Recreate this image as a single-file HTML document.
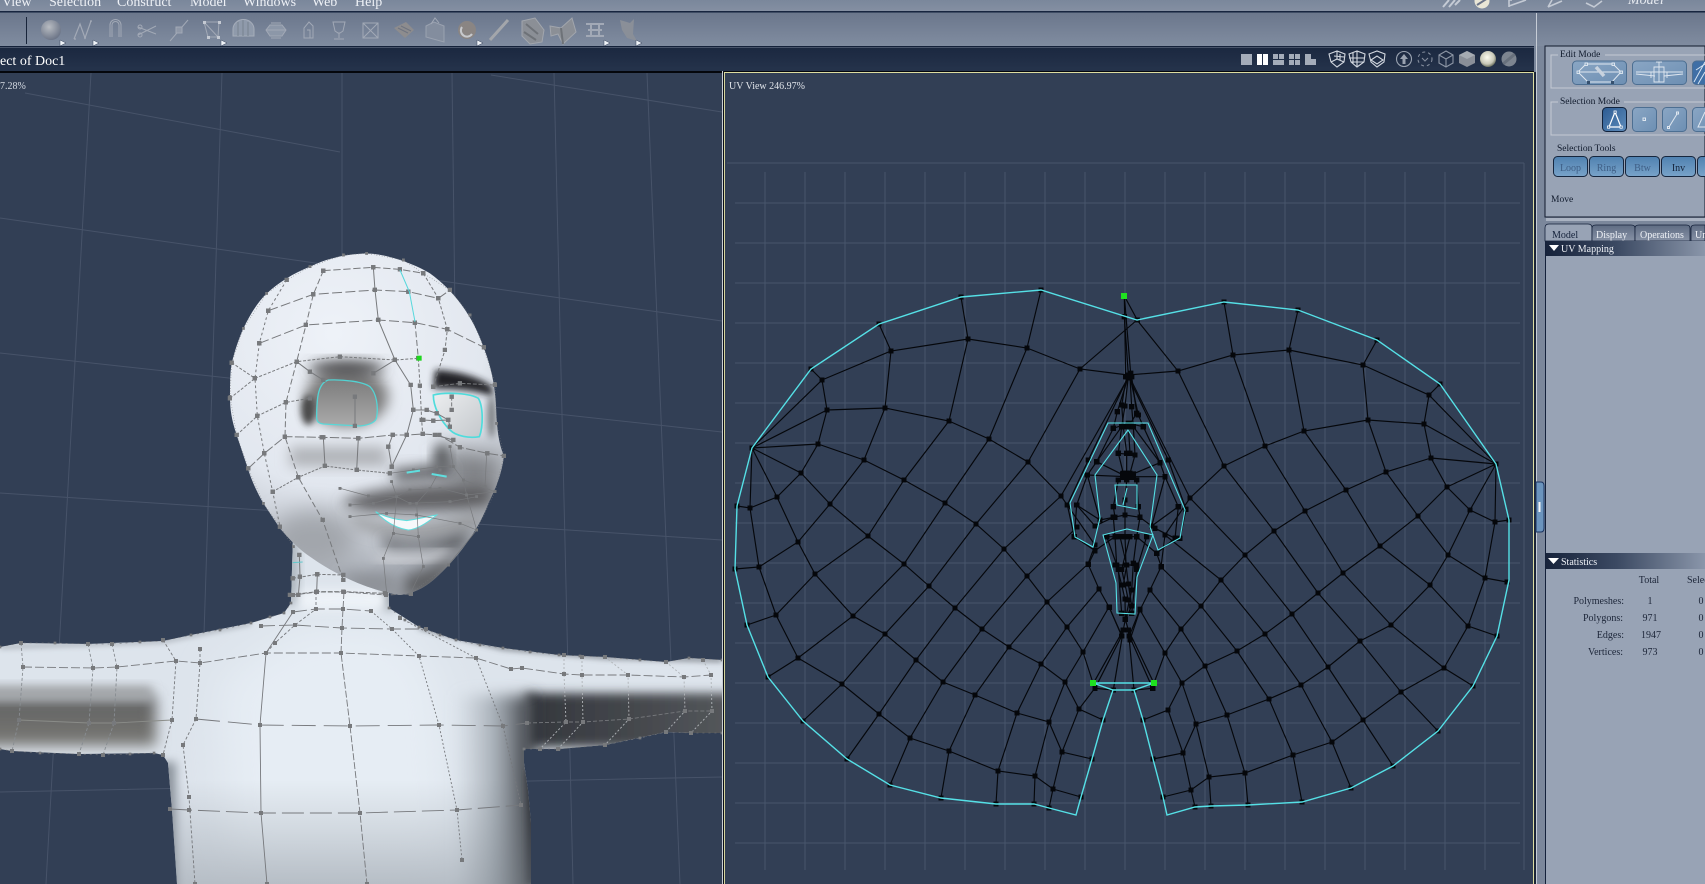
<!DOCTYPE html>
<html><head><meta charset="utf-8"><title>UV View</title>
<style>
html,body{margin:0;padding:0;background:#323f55;overflow:hidden}
svg{display:block}
text{font-family:"Liberation Serif",serif}
</style></head><body>
<svg width="1705" height="884" viewBox="0 0 1705 884" xmlns="http://www.w3.org/2000/svg">
<defs>
<marker id="k" viewBox="0 0 4 4" refX="2" refY="2" markerWidth="4.5" markerHeight="4.5"><rect width="4" height="4" fill="#05070b"/></marker>
<marker id="g" viewBox="0 0 4 4" refX="2" refY="2" markerWidth="4.5" markerHeight="4.5"><rect width="4" height="4" fill="#77797c"/></marker>
<linearGradient id="menu" x1="0" y1="0" x2="0" y2="1"><stop offset="0" stop-color="#7a879b"/><stop offset="1" stop-color="#848fa2"/></linearGradient>
<linearGradient id="tb" x1="0" y1="0" x2="0" y2="1"><stop offset="0" stop-color="#6b778c"/><stop offset="1" stop-color="#808ca0"/></linearGradient>
<linearGradient id="title" x1="0" y1="0" x2="0" y2="1"><stop offset="0" stop-color="#1b2840"/><stop offset="1" stop-color="#25334b"/></linearGradient>
<linearGradient id="hdr" x1="0" y1="0" x2="1" y2="0"><stop offset="0" stop-color="#17233b"/><stop offset=".45" stop-color="#3c4a63"/><stop offset="1" stop-color="#8a96aa"/></linearGradient>
<linearGradient id="btn" x1="0" y1="0" x2="1" y2="1"><stop offset="0" stop-color="#8aa6c4"/><stop offset="1" stop-color="#6d8fb3"/></linearGradient>
<linearGradient id="btn2" x1="0" y1="0" x2="0" y2="1"><stop offset="0" stop-color="#4f81b0"/><stop offset="1" stop-color="#79a3c9"/></linearGradient>
<linearGradient id="btn3" x1="0" y1="0" x2="1" y2="1"><stop offset="0" stop-color="#2c5b92"/><stop offset="1" stop-color="#5e8cbb"/></linearGradient>
<linearGradient id="tab" x1="0" y1="0" x2="0" y2="1"><stop offset="0" stop-color="#5f6c83"/><stop offset="1" stop-color="#8792a6"/></linearGradient>
<radialGradient id="sph" cx=".4" cy=".35" r=".7"><stop offset="0" stop-color="#b8bcc2"/><stop offset="1" stop-color="#687184"/></radialGradient>
<radialGradient id="glow" cx=".45" cy=".4" r=".6"><stop offset="0" stop-color="#fbfbf0"/><stop offset=".7" stop-color="#c8c8b8"/><stop offset="1" stop-color="#6d7260"/></radialGradient>
<radialGradient id="headg" gradientUnits="userSpaceOnUse" cx="400" cy="280" r="760"><stop offset="0" stop-color="#eef2f8"/><stop offset=".6" stop-color="#e2e7ef"/><stop offset=".85" stop-color="#c0c5cd"/><stop offset="1" stop-color="#9da2aa"/></radialGradient>
<linearGradient id="eyeL" x1="0" y1="0" x2="0" y2="1"><stop offset="0" stop-color="#7d7d7d"/><stop offset="1" stop-color="#aaa"/></linearGradient>
<linearGradient id="eyeR" x1="0" y1="0" x2="1" y2="1"><stop offset="0" stop-color="#eceef0"/><stop offset="1" stop-color="#c4c8cc"/></linearGradient>
<linearGradient id="armL" x1="0" y1="0" x2="0" y2="1"><stop offset="0" stop-color="#616264"/><stop offset=".5" stop-color="#6c6c6a"/><stop offset="1" stop-color="#7a7a77"/></linearGradient>
<linearGradient id="armR" x1="0" y1="0" x2="1" y2="0"><stop offset="0" stop-color="#34373d"/><stop offset=".5" stop-color="#44474c"/><stop offset="1" stop-color="#55585c"/></linearGradient>
<linearGradient id="torsoR" gradientUnits="userSpaceOnUse" x1="455" y1="0" x2="531" y2="0"><stop offset="0" stop-color="#b4bcc4" stop-opacity="0"/><stop offset=".55" stop-color="#a4acb4"/><stop offset=".8" stop-color="#6d7279"/><stop offset="1" stop-color="#34373c"/></linearGradient>
<linearGradient id="lowshade" gradientUnits="userSpaceOnUse" x1="0" y1="780" x2="0" y2="884"><stop offset="0" stop-color="#7c848c" stop-opacity="0"/><stop offset="1" stop-color="#7c848c" stop-opacity=".4"/></linearGradient>
<filter id="b3" x="-50%" y="-50%" width="200%" height="200%"><feGaussianBlur stdDeviation="3"/></filter>
<filter id="b5" x="-50%" y="-50%" width="200%" height="200%"><feGaussianBlur stdDeviation="5"/></filter>
<filter id="b7" x="-50%" y="-50%" width="200%" height="200%"><feGaussianBlur stdDeviation="7"/></filter>
<filter id="b10" x="-50%" y="-50%" width="200%" height="200%"><feGaussianBlur stdDeviation="10"/></filter>
<filter id="b20" x="-50%" y="-50%" width="200%" height="200%"><feGaussianBlur stdDeviation="20"/></filter>
<filter id="b35" x="-60%" y="-60%" width="220%" height="220%"><feGaussianBlur stdDeviation="35"/></filter>
<clipPath id="vL"><rect x="0" y="73" width="722" height="811"/></clipPath>
<clipPath id="bodyc"><path d="M0 647 21 643 88 644 163 641 191 635 251 623 284 613 291 603 293 535 389 535 389 608 419 627 456 640 503 648 559 655 605 657 666 662 689 658 722 660 722 733 691 733 666 732 605 745 559 749 524 749 524 763 528 790 531 823 531 884 177 884 172 810 168 763 163 755 154 753 79 754 12 751 0 749Z"/></clipPath>
<clipPath id="headc"><path d="M500 40C560 42 640 70 690 100C760 150 820 230 850 320C870 370 885 430 888 500C890 560 895 610 912 648C905 700 890 740 865 790C840 860 780 950 700 1020C670 1045 640 1060 600 1065C500 1050 400 1000 330 950C300 930 270 900 240 865L190 790C165 745 155 720 145 690L110 585C95 540 90 510 90 470C90 430 90 400 95 370C105 330 115 300 130 265C150 225 170 190 200 160C240 125 280 100 330 80C380 55 440 42 500 40Z"/></clipPath>
</defs>

<!-- chrome -->
<rect width="1705" height="884" fill="#7b879b"/>
<rect width="1705" height="11" fill="url(#menu)"/>
<rect y="11" width="1705" height="1.6" fill="#17253f"/>
<rect y="13" width="1536" height="33" fill="url(#tb)"/>
<rect x="1537" y="13" width="168" height="33" fill="url(#tb)"/>
<rect x="1536" y="13" width="1" height="871" fill="#c6ccd6"/>
<rect y="46" width="1534" height="1.5" fill="#14213a"/>
<rect y="48" width="1534" height="23" fill="url(#title)"/>
<rect y="71" width="1534" height="2" fill="#05070c"/>

<g fill="#eef1f6" font-size="14">
<text x="2" y="6">View</text><text x="49" y="6">Selection</text><text x="117" y="6">Construct</text><text x="190" y="6">Model</text><text x="243" y="6">Windows</text><text x="312" y="6">Web</text><text x="355" y="6">Help</text>
</g>
<text x="1628" y="4" font-size="14" font-style="italic" fill="#e6eaf0">Model</text>
<!-- top right icons -->
<g fill="none" stroke="#c4cad4" stroke-width="2">
<path d="M1443 7 1449 0M1449 7 1455 0M1455 5 1460 0"/>
<path d="M1509 6 1526 0M1509 7V0L1512 0" stroke-width="1.6"/>
<path d="M1548 7 1562 1M1548 7 1552 0" stroke-width="1.6"/>
<path d="M1586 3 1594 7 1602 1" stroke-width="1.6"/>
</g>
<circle cx="1482" cy="1" r="7.5" fill="#e9e6d6"/><path d="M1477 5 1488 -2" stroke="#6b7488" stroke-width="2"/>

<!-- toolbar -->
<rect x="26" y="17" width="1" height="27" fill="#18243a"/>
<g fill="none" stroke="#a2a9b6" stroke-width="1">
<circle cx="51" cy="30" r="10" fill="url(#sph)" stroke="none"/>
<path d="M74 39 80 24 85 38 91 21M74 39h2M84 38h2M90 21h2" stroke-width="1.2"/>
<path d="M110 37V25a5.500 5.500 0 0 1 11 0V37M112 37V25a3.500 3.500 0 0 1 7 0V37" />
<path d="M138 27 156 34M138 35 156 26"/><circle cx="140" cy="27" r="2"/><circle cx="140" cy="35" r="2"/>
<path d="M170 41 188 20"/><rect x="176" y="27" width="6" height="6" fill="#8f98a8"/>
<path d="M204 22H219L218 37H208ZM204 22 218 37" /><g fill="#c4c9d2" stroke="none"><rect x="203" y="21" width="3" height="3"/><rect x="218" y="21" width="3" height="3"/><rect x="207" y="36" width="3" height="3"/><rect x="217" y="36" width="3" height="3"/></g>
<path d="M233 36V29a10 9 0 0 1 21 0V36Z" fill="#8f9aab" stroke="#a5adba"/><path d="M243 20V36M238 22V36M248 22V36" stroke="#77828f"/>
<path d="M270 25H282L286 30 282 36H270L266 30Z" fill="#8c97a8"/><path d="M271 23H281M271 38H281M266 30H286"/>
<path d="M304 38V28L309 22 313 26V38ZM307 30H310V38"/>
<path d="M333 22H345L343 31 340 33H338L335 31ZM339 33V38M334 39H344"/>
<rect x="363" y="23" width="15" height="15"/><path d="M363 23 378 38M378 23 363 38"/>
<path d="M394 28 406 22 414 30 405 38Z" fill="#8d8c8e" stroke="none"/><path d="M398 28 408 33M401 26 411 31" stroke="#6f7480"/>
<path d="M426 26 434 22 444 26V42L426 37Z" fill="#838d9e" stroke="#9aa2b0"/><path d="M431 24 435 18 439 23"/>
<circle cx="467" cy="30" r="9" fill="#8a8583" stroke="none"/><path d="M462 27a6 6 0 0 0 10 7" stroke="#c7c9cd" stroke-width="2"/>
<path d="M490 40 508 20" stroke="#a3a6ab" stroke-width="3"/>
<path d="M522 21 535 18 544 30 542 42 530 44 522 36Z" fill="#8b8f96" stroke="#a2a6ad"/><path d="M526 24 538 34M524 32 536 40" stroke="#6e7278" stroke-width="2"/>
<path d="M550 26 561 28 572 18 576 32 563 44 558 34 551 36Z" fill="#8b8f96" stroke="#a2a6ad"/><path d="M561 28 563 44" stroke="#6e7278" stroke-width="2"/>
<path d="M586 24H604M586 36H604M591 24V36M599 24V36M588 30H602" stroke-width="2"/>
<path d="M620 20 630 23 634 19 633 34 637 41 627 38 622 30Z" fill="#8a8f98" stroke="none"/>
</g>
<g fill="#f0f3f8" stroke="#3a4660" stroke-width=".5"><path d="M60 40 66 43 60 46Z"/><path d="M93 40 99 43 93 46Z"/><path d="M221 40 227 43 221 46Z"/><path d="M477 40 483 43 477 46Z"/><path d="M604 40 610 43 604 46Z"/><path d="M636 40 642 43 636 46Z"/></g>

<text x="0" y="65" font-size="14" fill="#fff">ect of Doc1</text>
<!-- title bar icons -->
<g fill="#a4acb9">
<rect x="1241" y="54" width="11" height="11"/>
<rect x="1257" y="54" width="5" height="11" fill="#fff"/><rect x="1263" y="54" width="5" height="11" fill="#fff"/>
<rect x="1273" y="54" width="5" height="5"/><rect x="1279" y="54" width="5" height="5"/><rect x="1273" y="60" width="11" height="5"/>
<rect x="1289" y="54" width="5" height="5"/><rect x="1295" y="54" width="5" height="5"/><rect x="1289" y="60" width="5" height="5"/><rect x="1295" y="60" width="5" height="5"/>
<path d="M1305 54H1311V59H1316V65H1305Z"/>
</g>
<g fill="none" stroke="#d3d8e0" stroke-width="1.100">
<path d="M1329 54 1337 51 1345 54 1344 62 1337 67 1331 62ZM1337 51V59L1331 62M1337 59 1344 62M1340 54V60M1334 56 1344 57"/>
<path d="M1349 54 1357 51 1365 54 1364 62 1357 67 1351 62ZM1353 53V64M1357 51V67M1349 58H1365M1351 62H1364"/>
<path d="M1369 54 1377 51 1385 54 1384 62 1377 67 1371 62ZM1371 60 1377 56 1383 60 1377 64Z"/>
<circle cx="1404" cy="59" r="7.500" stroke="#99a2b0"/><path d="M1404 54 1400 59H1402.500V64H1405.500V59H1408Z" fill="#99a2b0" stroke="none"/>
<circle cx="1425" cy="59" r="7" stroke="#838c9c" stroke-dasharray="3 3"/><path d="M1422 58 1425 61 1428 58" stroke="#838c9c"/>
<path d="M1446 51 1453 55V63L1446 67 1439 63V55ZM1439 55 1446 59 1453 55M1446 59V67" stroke="#8d96a5"/>
</g>
<path d="M1467 51 1475 55V63L1467 67 1459 63V55Z" fill="#8a8f98"/><path d="M1467 51 1475 55 1467 59 1459 55Z" fill="#a6abb2"/>
<circle cx="1488" cy="59" r="8" fill="url(#glow)"/>
<circle cx="1509" cy="59" r="7.500" fill="#7d8590"/><path d="M1503 64 1515 54" stroke="#5b6472" stroke-width="3" opacity=".6"/>

<!-- viewports -->
<rect x="0" y="73" width="722" height="811" fill="#323f55"/>
<rect x="722" y="71" width="1" height="813" fill="#c9ced4"/>
<rect x="723" y="71" width="1.500" height="813" fill="#0a0f18"/>
<rect x="724.500" y="73" width="809" height="811" fill="#323f55"/>
<rect x="724" y="72" width="810" height="1" fill="#dcdca0"/>
<rect x="724" y="72" width="1" height="812" fill="#d4d49c"/>
<rect x="1533" y="72" width="1" height="812" fill="#dcdca0"/>
<rect x="1534" y="72" width="2" height="812" fill="#1a2536"/>

<!-- left grid -->
<g stroke="#475369" stroke-width="1" fill="none" clip-path="url(#vL)">
<path d="M91 73 46 884M222 73 196 884M342 73 342 884M452 73 462 884M554 73 573 884M647 73 680 884"/>
<path d="M0 218 722 321M0 353 722 432M0 493 722 540M0 792 722 777M491 75 722 112M25 93 340 152"/>
</g>
<text x="0" y="89" font-size="10" fill="#d6dbe3">7.28%</text>

<!-- character -->
<g clip-path="url(#vL)">
<g clip-path="url(#bodyc)">
<rect x="0" y="530" width="722" height="354" fill="#dde4ec"/>
<rect x="284" y="535" width="14" height="70" fill="#a9b1b9" filter="url(#b5)"/>
<rect x="381" y="535" width="14" height="75" fill="#8d949c" filter="url(#b5)"/>
<rect x="300" y="590" width="85" height="20" fill="#eef3f8" filter="url(#b5)"/>
<path d="M300 626 400 626 440 680 450 860 230 860 220 680Z" fill="#e6edf4" filter="url(#b20)"/>
<rect x="-20" y="696" width="176" height="50" fill="url(#armL)" filter="url(#b7)"/>
<rect x="-20" y="686" width="172" height="14" fill="#a2a5a8" filter="url(#b5)"/>
<rect x="526" y="693" width="210" height="54" fill="url(#armR)" filter="url(#b5)"/>
<rect x="455" y="695" width="80" height="205" fill="url(#torsoR)" filter="url(#b7)"/>
<rect x="154" y="762" width="22" height="130" fill="#8b939b" filter="url(#b5)"/>
<rect x="526" y="770" width="10" height="115" fill="#2f3238" filter="url(#b3)"/>
<rect x="0" y="780" width="722" height="104" fill="url(#lowshade)"/>
<path d="M0 647 88 644 163 641 251 623" stroke="#9aa0a8" stroke-width="3" fill="none" filter="url(#b3)"/>
<path d="M419 627 503 648 605 657 722 660" stroke="#5c6068" stroke-width="3" fill="none" filter="url(#b3)"/>
</g>
<g fill="none" stroke="#76787c" stroke-width=".9" marker-start="url(#g)" marker-mid="url(#g)" marker-end="url(#g)">
<path stroke-dasharray="9 3" d="M23 667 93 668 117 667 176 661 200 663 266 653 341 653 419 656 476 658 511 669 522 668 564 674 582 675 628 675 684 677 711 675"/>
<path stroke-dasharray="14 4" d="M261 626 295 625 342 628 392 629 426 629"/>
<path stroke-dasharray="14 4" d="M293 612 316 609 343 609 371 611"/>
<path stroke-dasharray="5 2" d="M293 595 317 592 344 592 386 595 411 594"/>
<path d="M19 720 89 723 114 723 172 720" stroke="#8a8c88"/>
<path stroke-dasharray="24 8" d="M196 719 260 725 350 726 439 725 503 726 527 723"/>
<path stroke-dasharray="4 2" d="M527 723 566 722 583 722 629 719 685 711 712 711"/>
<path stroke-dasharray="22 6" d="M170 809 189 810 261 813 360 813 457 810 521 805"/>
<path stroke-dasharray="3 2" stroke="#888d92" d="M21 643 23 667 19 720 12 751"/>
<path stroke-dasharray="3 2" stroke="#888d92" d="M88 644 93 668 89 723 79 754"/>
<path stroke-dasharray="3 2" stroke="#888d92" d="M112 644 117 667 114 723 103 755"/>
<path stroke-dasharray="3 2" d="M163 640 176 661 172 720 163 755"/>
<path stroke-dasharray="3 2" d="M200 649 200 663 196 719 183 745 189 797 195 884"/>
<path d="M293 612 266 653 260 725 261 813 267 884"/>
<path stroke-dasharray="3 2" d="M316 592 316 609 295 625 275 643 266 653"/>
<path stroke-dasharray="7 2" d="M344 592 343 609 342 628 341 653 350 726 360 813 367 884"/>
<path stroke-dasharray="2 2" d="M371 611 392 629 419 656 439 725 457 810 462 860"/>
<path stroke-dasharray="2 2" d="M400 618 476 658 503 726 521 805"/>
<path stroke-dasharray="2 2" stroke="#b0b4b8" d="M564 655 564 674 566 722 540 749"/>
<path stroke-dasharray="2 2" stroke="#b0b4b8" d="M582 657 582 675 583 722 558 749"/>
<path stroke-dasharray="2 2" stroke="#b0b4b8" d="M605 657 628 675 629 719 605 745"/>
<path stroke-dasharray="2 2" stroke="#b0b4b8" d="M666 662 684 677 685 711 666 732"/>
<path stroke-dasharray="2 2" stroke="#b0b4b8" d="M703 660 711 675 712 711 691 733"/>
<path stroke-dasharray="2 4" stroke-width=".6" d="M0 647 21 643 55 643 88 644 112 644 140 642 163 641 191 635 220 630 251 623 270 617 284 613 291 603"/>
<path stroke-dasharray="2 4" stroke-width=".6" d="M389 608 405 620 419 627 440 635 456 640 480 645 503 648 530 652 559 655 580 656 605 657 640 660 666 662 689 658 722 660"/>
<path stroke-dasharray="2 4" stroke-width=".6" d="M0 749 12 751 40 753 79 754 103 755 130 754 154 753"/>
<path stroke-dasharray="2 4" stroke-width=".6" d="M524 749 540 749 559 749 605 745 640 738 666 732 691 733 722 733"/>
</g>

<!-- head -->
<g transform="translate(200 240) scale(.33333)">
<path d="M500 40C560 42 640 70 690 100C760 150 820 230 850 320C870 370 885 430 888 500C890 560 895 610 912 648C905 700 890 740 865 790C840 860 780 950 700 1020C670 1045 640 1060 600 1065C500 1050 400 1000 330 950C300 930 270 900 240 865L190 790C165 745 155 720 145 690L110 585C95 540 90 510 90 470C90 430 90 400 95 370C105 330 115 300 130 265C150 225 170 190 200 160C240 125 280 100 330 80C380 55 440 42 500 40Z" fill="url(#headg)"/>
<g clip-path="url(#headc)">
<ellipse cx="340" cy="900" rx="130" ry="90" fill="#a2a6ac" filter="url(#b35)"/>
<ellipse cx="440" cy="470" rx="125" ry="90" fill="#7c7c7c" filter="url(#b20)"/>
<ellipse cx="440" cy="385" rx="115" ry="22" fill="#4c4c4e" filter="url(#b20)"/>
<ellipse cx="325" cy="510" rx="22" ry="45" fill="#4a4a4a" filter="url(#b10)"/>
<rect x="270" y="620" width="290" height="60" fill="#b0b3b8" filter="url(#b20)"/>
<path d="M705 390C760 390 840 410 875 440L880 470C840 450 750 445 700 445Z" fill="#222326" filter="url(#b10)"/>
<ellipse cx="875" cy="530" rx="12" ry="65" fill="#777a7e" filter="url(#b10)"/>
<path d="M740 610 800 640 900 640 900 750 790 770 740 700Z" fill="#7d7f83" filter="url(#b35)"/>
<ellipse cx="725" cy="650" rx="22" ry="40" fill="#45464a" filter="url(#b20)"/>
<path d="M570 690 750 670 760 710 590 725Z" fill="#55565a" filter="url(#b20)"/>
<path d="M420 790C480 745 700 725 880 735L870 800 800 810 640 815 500 815Z" fill="#606164" filter="url(#b20)"/>
<path d="M440 815C540 870 720 870 850 805L830 860C720 905 560 900 470 860Z" fill="#97999b" filter="url(#b20)"/>
<path d="M540 890C600 915 730 915 810 870L780 925 560 925Z" fill="#4e4f52" filter="url(#b20)"/>
<path d="M530 950C600 965 680 965 750 935" fill="none" stroke="#d4d6da" stroke-width="26" filter="url(#b20)"/>
<path d="M620 1010 700 980 790 930 700 1060 600 1070Z" fill="#5e6064" filter="url(#b20)"/>
<path d="M420 1000 560 1000 620 1060 500 1070Z" fill="#8e9298" filter="url(#b20)"/>
</g>
<path d="M350 530C350 470 355 430 385 420C430 418 490 425 510 440C530 460 535 500 530 530C530 545 510 555 480 558L370 552C355 550 350 545 350 530Z" fill="url(#eyeL)" stroke="#4fdcdc" stroke-width="4" stroke-opacity=".9"/>
<path d="M700 465C740 455 810 460 835 475C850 500 850 560 838 590C810 595 770 590 750 570C720 540 700 500 700 465Z" fill="url(#eyeR)" stroke="#4fdcdc" stroke-width="5"/>
<path d="M527 815C560 835 600 840 620 842C650 838 680 830 710 825C680 850 650 868 625 870C590 865 555 845 527 815Z" fill="#f6f8fa" stroke="#5fdede" stroke-width="3"/>
<g fill="none" stroke="#77797c" stroke-width="3" marker-start="url(#g)" marker-mid="url(#g)" marker-end="url(#g)">
<path stroke-dasharray="22 8" d="M370 92 520 82 600 88 670 100"/>
<path stroke-dasharray="30 10" d="M205 212 340 163 525 150 625 155 715 175 750 150"/>
<path stroke-dasharray="30 10" d="M178 310 318 255 535 240 645 248 742 268 852 322"/>
<path stroke-dasharray="9 5" d="M95 368 165 415 290 365 420 350 585 360 655 355"/>
<path stroke-dasharray="9 5" d="M90 475 165 415"/>
<path stroke-dasharray="9 5" d="M110 585 172 528 258 487 330 475"/>
<path stroke-dasharray="28 7" d="M145 685 193 640 255 590 365 592 475 595 578 585 620 585 668 582 718 585 780 622 862 640 912 648"/>
<path stroke-dasharray="8 4" d="M218 755 295 712 375 678 470 690 570 700"/>
<path d="M520 82 525 150 535 240 585 360 632 435 640 510 620 585 575 680"/>
<path stroke-dasharray="10 6" d="M655 355 660 437 665 540 668 582"/>
<path stroke-dasharray="18 8" d="M645 248 655 355"/>
<path stroke-dasharray="18 8" d="M370 92 340 163 318 255 290 365 258 487 255 590 295 712 368 840 430 1020"/>
<path stroke-dasharray="8 8" d="M260 120 205 212 178 310 165 415 172 528 193 640 218 755 240 860"/>
<path stroke-dasharray="10 6" d="M670 100 715 175 742 268 735 330 700 440"/>
<path d="M370 592 375 678"/><path d="M475 595 470 690"/><path d="M465 470 465 558"/>
<path d="M290 365 330 395 370 420"/><path d="M585 360 520 400"/>
<path stroke-dasharray="12 5" d="M700 440 780 430 885 435"/>
<path stroke-dasharray="12 5" d="M755 470 755 510"/>
<path d="M640 510 680 510 710 520 745 540 750 560"/><path d="M670 540 700 542 745 540"/>
<path d="M578 585 565 620 575 680"/><path d="M705 585 760 600"/>
<path stroke-width="2" d="M570 700 640 690 710 680 750 680"/>
<path stroke-width="2" d="M750 620 760 680 790 720 885 755"/><path stroke-width="2" d="M860 640 855 740"/>
<path stroke-width="2" d="M420 745 505 768 590 770 630 750 720 745 800 765 885 755"/>
<path stroke-width="2" d="M450 795 520 790 590 770 630 790 750 785 830 770"/>
<path stroke-width="2" d="M450 830 560 820 650 825 780 850 830 870"/>
<path stroke-width="2" d="M575 725 590 770 580 880 550 955 560 1060"/>
<path stroke-width="2" d="M720 690 690 745 650 790 655 890 670 980 630 1062"/>
<path stroke-width="2" d="M790 720 800 765 830 870 745 975"/>
<path stroke-width="2" d="M580 880 655 890"/>
<path stroke-dasharray="10 5" d="M278 1015 352 1003 430 1005"/>
<path stroke-dasharray="14 5" d="M270 1065 350 1055 430 1055 555 1060"/>
<path d="M298 945 300 1010 295 1065"/><path d="M352 1003 350 1055"/>
<path stroke-dasharray="2 6" stroke-width="2" d="M90 470 95 370 130 265 200 160 260 120 330 80 430 45 500 40 610 60 670 100 750 150 810 225 850 320 885 430 890 550 912 648 885 755 830 870 745 975 630 1062"/>
<path stroke-dasharray="2 6" stroke-width="2" d="M90 470 110 585 145 685 190 790 240 860 280 920"/>
</g>
<path d="M600 90 628 155 645 245" fill="none" stroke="#55d8dc" stroke-width="3"/>
<path d="M620 698 660 692M695 702 740 710" fill="none" stroke="#5fdede" stroke-width="6"/>
<path d="M278 968 308 966" stroke="#5fc8cc" stroke-width="3"/>
<rect x="650" y="347" width="15" height="15" fill="#1fd61f"/>
</g>
</g>

<!-- UV grid -->
<g stroke="#48556b" stroke-width="1" fill="none" shape-rendering="crispEdges">
<path d="M727 163H1524"/>
<path d="M735 203H1520M735 243H1520M735 283H1520M735 323H1520M735 363H1520M735 403H1520M735 443H1520M735 483H1520M735 523H1520M735 563H1520M735 603H1520M735 643H1520M735 683H1520M735 723H1520M735 763H1520M735 803H1520M735 843H1520"/>
<path d="M765 172V870M805 172V870M845 172V870M885 172V870M925 172V870M965 172V870M1005 172V870M1045 172V870M1085 172V870M1125 172V870M1165 172V870M1205 172V870M1245 172V870M1285 172V870M1325 172V870M1365 172V870M1405 172V870M1445 172V870M1485 172V870M1524 163V870"/>
</g>
<text x="729" y="89" font-size="10" fill="#e0e4ea">UV View 246.97%</text>

<!-- UV mesh -->
<g fill="none" stroke="#05070b" stroke-width="1.150" marker-start="url(#k)" marker-mid="url(#k)" marker-end="url(#k)">
<path d="M811 369 822 380 891 351 968 339 1027 348 1080 369 1128 375 1178 371 1233 355 1289 350 1363 365 1429 395 1440 384"/>
<path d="M879 324 891 351 885 408"/><path d="M961 297 968 339 949 421"/><path d="M1041 290 1027 348 989 439"/><path d="M1137 320 1080 369 1028 462"/><path d="M1137 320 1178 371 1224 466"/><path d="M1224 302 1233 355 1265 446"/><path d="M1298 310 1289 350 1304 431"/><path d="M1377 340 1363 365 1368 420"/>
<path d="M827 410 885 408 949 421 989 439 1028 462 1061 496 1095 545 1088 564 1099 589 1109 607 1122 636"/>
<path d="M1424 424 1368 420 1304 431 1265 446 1224 466 1190 498 1165 535 1161 567 1150 590 1140 610 1130 640"/>
<path d="M1128 378 1061 496"/><path d="M1130 378 1190 498"/>
<path d="M752 448 822 380 827 410 818 444 801 473 777 497 750 508"/><path d="M752 448 827 410"/><path d="M752 448 818 444"/><path d="M752 448 801 473"/><path d="M752 448 777 497"/><path d="M752 448 750 508 737 506"/><path d="M750 508 759 567 735 569"/>
<path d="M818 444 864 460 904 480 945 503 976 524 1004 549 1027 576 1047 602 1067 627 1083 652 1093 683"/>
<path d="M801 473 830 504 868 536 904 564 929 586 955 608 982 629 1009 647 1041 664 1065 682 1079 709 1103 720"/>
<path d="M777 497 798 542 815 574 853 616 885 634 916 660 943 682 975 695 1017 713 1049 722 1062 752 1092 759"/>
<path d="M759 567 776 615 798 658 842 684 879 714 910 738 949 751 998 771 1035 776 1053 789 1081 797"/>
<path d="M885 408 864 460 830 504 798 542 759 567"/>
<path d="M949 421 904 480 868 536 815 574 776 615 747 625"/>
<path d="M989 439 945 503 904 564 853 616 798 658 768 677"/>
<path d="M1028 462 976 524 929 586 885 634 842 684 803 721"/>
<path d="M1061 496 1004 549 955 608 916 660 879 714 847 759"/>
<path d="M1077 527 1027 576 982 629 943 682 910 738 890 785"/>
<path d="M1088 564 1047 602 1009 647 975 695 949 751 941 798"/>
<path d="M1099 589 1067 627 1041 664 1017 713 998 771 996 804"/>
<path d="M1109 607 1083 652 1065 682 1049 722 1035 776 1034 804"/>
<path d="M1095 688 1079 709 1062 752 1053 789 1049 808"/>
<path d="M1496 464 1429 395 1424 424 1431 458 1447 487 1470 510 1495 522 1509 520"/><path d="M1496 464 1424 424"/><path d="M1496 464 1431 458"/><path d="M1496 464 1447 487"/><path d="M1496 464 1470 510"/><path d="M1496 464 1495 522 1485 578 1507 582"/>
<path d="M1431 458 1386 472 1346 490 1305 511 1274 531 1245 555 1221 580 1201 606 1181 629 1165 653 1154 683"/>
<path d="M1447 487 1418 516 1380 546 1343 573 1318 593 1292 614 1265 634 1237 651 1205 666 1182 683 1168 710 1143 720"/>
<path d="M1470 510 1448 555 1430 585 1391 625 1360 641 1328 667 1301 685 1269 699 1227 715 1196 724 1183 753 1153 759"/>
<path d="M1485 578 1468 626 1444 668 1401 692 1363 720 1332 742 1293 755 1245 773 1209 777 1191 790 1163 797"/>
<path d="M1304 431 1346 490 1380 546 1430 585 1468 626 1497 636"/>
<path d="M1368 420 1386 472 1418 516 1448 555 1485 578"/>
<path d="M1265 446 1305 511 1343 573 1391 625 1444 668 1473 686"/>
<path d="M1224 466 1274 531 1318 593 1360 641 1401 692 1438 731"/>
<path d="M1190 498 1245 555 1292 614 1328 667 1363 720 1393 766"/>
<path d="M1165 535 1221 580 1265 634 1301 685 1332 742 1351 788"/>
<path d="M1161 567 1201 606 1237 651 1269 699 1293 755 1302 802"/>
<path d="M1150 590 1181 629 1205 666 1227 715 1245 773 1248 805"/>
<path d="M1140 610 1165 653 1182 683 1196 724 1209 777 1211 806"/>
<path d="M1168 710 1183 753 1191 790 1195 807"/>
<g transform="translate(980 280) scale(.33333)" stroke-width="3.600">
<path d="M433 48 437 290"/><path d="M433 48 452 280"/><path d="M433 48 472 120"/><path d="M433 110 445 285"/>
<path d="M445 290 435 378 425 440 415 520 430 580"/><path d="M450 290 455 380 460 440 465 525 450 580"/>
<path d="M440 290 425 375 430 440 440 520 440 580"/><path d="M455 290 470 400 445 440 450 520"/>
<path d="M445 290 412 395 400 445 350 545 322 585 290 675 283 770 345 812"/>
<path d="M450 290 475 405 490 440 540 548 555 590 595 680 585 775 530 820"/>
<path d="M400 445 445 430 490 440"/><path d="M415 520 465 525"/><path d="M425 440 350 545"/><path d="M460 440 540 548"/>
<path d="M445 290 325 540 262 675 283 770"/><path d="M445 290 565 540 618 688 600 775"/>
<path d="M350 545 440 590 540 548"/><path d="M322 585 440 590 555 590"/>
<path d="M415 600 400 680 405 712"/><path d="M470 600 475 680 480 712"/><path d="M440 600 435 660 435 705"/>
<path d="M322 585 360 720"/><path d="M555 590 515 738"/><path d="M290 675 345 738"/>
<path d="M290 675 360 720 400 712 435 705 480 712 515 738 595 680"/>
<path d="M345 738 400 712"/><path d="M525 745 585 775"/>
<path d="M405 770 410 855 425 915 435 957 436 1018"/><path d="M435 770 438 855 445 912 455 978 436 1018"/><path d="M470 770 460 850 455 930 436 1018"/>
<path d="M400 712 405 770"/><path d="M435 705 435 770"/><path d="M480 712 470 770"/>
<path d="M380 770 415 868 425 1000"/><path d="M500 770 470 868 455 1000"/>
<path d="M420 770 440 855 430 915"/><path d="M450 770 425 868 445 960"/>
<path d="M380 770 470 770"/><path d="M405 855 470 855"/>
<path d="M325 853 345 812 405 770"/><path d="M544 860 530 820 470 770"/>
<path d="M388 982 425 1068 345 1225"/><path d="M480 988 448 1068 518 1225"/>
<path d="M436 1018 430 1050 400 1230"/><path d="M436 1018 445 1050 462 1230"/>
<path d="M430 1050 340 1210"/><path d="M445 1050 522 1210"/>
<path d="M345 1225 400 1230 462 1230 518 1225"/>
<rect x="420" y="574" width="48" height="26" fill="#05070b" stroke="none"/>
</g>
</g>

<!-- cyan -->
<g fill="none" stroke="#55e0e6" stroke-width="1.400">
<path d="M1113 690 1103 720 1092 759 1081 797 1076 815 1049 808 1034 804 996 804 941 798 890 785 847 759 803 721 768 677 747 625 735 569 737 506 752 448 811 369 879 324 961 297 1041 290 1137 320 1224 302 1298 310 1377 340 1440 384 1496 464 1509 520 1509 580 1497 636 1473 686 1438 731 1393 766 1351 788 1302 802 1248 805 1211 806 1195 807 1167 815 1163 797 1153 759 1143 720 1134 690"/>
<path d="M1093 683H1154M1093 683 1113 690 1134 690 1154 683"/>
<g stroke-width="1.100">
<path d="M1108 423H1148L1185 510 1180 538 1158 550 1150 527 1157 475 1128 430 1095 475 1100 518 1093 547 1075 537 1070 503Z"/>
<path d="M1103 535 1127 529 1153 535 1137 577 1135 614 1117 613 1116 583Z"/>
<path d="M1115 485H1137V509L1117 505ZM1127 488 1123 505"/>
</g>
</g>
<rect x="1121" y="293" width="6" height="6" fill="#20e020"/>
<rect x="1090" y="680" width="6" height="6" fill="#20e020"/>
<rect x="1151" y="680" width="6" height="6" fill="#20e020"/>

<!-- sidebar -->
<path d="M1536 482H1541Q1544 482 1544 486V528Q1544 532 1541 532H1536Z" fill="#6b94bd" stroke="#1c3560"/>
<rect x="1538.500" y="502" width="2" height="10" fill="#f4f6f8"/>
<rect x="1545" y="46" width="160" height="171" fill="#98a3b5" stroke="#101a2c" stroke-width="1"/>
<rect x="1546" y="218" width="159" height="3" fill="#aab3c2"/>
<g fill="none" stroke="#c4cad4" stroke-width="1">
<path d="M1558 55H1551V88H1705M1605 55H1705" />
<path d="M1558 102H1551V135H1705M1624 102H1705" />
</g>
<g fill="#101a2c" font-size="9.500">
<text x="1560" y="57">Edit Mode</text>
<text x="1560" y="104">Selection Mode</text>
<text x="1557" y="151">Selection Tools</text>
<text x="1551" y="202">Move</text>
</g>
<!-- edit buttons -->
<g stroke="#4d6f92" fill="url(#btn)">
<rect x="1572.500" y="61" width="54" height="23.500" rx="4"/>
<rect x="1632.500" y="61" width="54" height="23.500" rx="4"/>
<rect x="1692.500" y="61" width="30" height="23.500" rx="4" fill="#3f6fa6"/>
<rect x="1632.500" y="107.500" width="24" height="24" rx="4"/>
<rect x="1662.500" y="107.500" width="24" height="24" rx="4"/>
<rect x="1692.500" y="107.500" width="24" height="24" rx="4"/>
</g>
<rect x="1602.500" y="107.500" width="24" height="24" rx="4" fill="url(#btn3)" stroke="#12233c"/>
<g fill="none" stroke="#dfe7f0" stroke-width="1">
<path d="M1578 72 1586 64H1613L1621 72 1612 82H1588Z M1578 72H1621"/>
<g fill="#8aa6c4" stroke="#eaf0f6" stroke-width=".8"><rect x="1585" y="63" width="2.500" height="2.500"/><rect x="1612" y="63" width="2.500" height="2.500"/><rect x="1620" y="71" width="2.500" height="2.500"/><rect x="1577" y="71" width="2.500" height="2.500"/></g>
<g fill="#36506e" stroke="none"><rect x="1587" y="81" width="3" height="3"/><rect x="1611" y="81" width="3" height="3"/></g>
<path d="M1596 67 1604 76" stroke-width="3.500" stroke="#c8d2de"/>
<path d="M1636 72H1683M1636 74 1655 76M1683 74 1664 76M1654 67H1664V82H1654ZM1659 62V82M1656 62H1662M1651 72V78M1667 72V78" stroke-width=".9"/>
<path d="M1694 82 1705 62M1698 84 1705 72M1696 70 1705 64" stroke="#d6e4f2"/>
<path d="M1615 112 1609 127H1621Z" stroke="#fff" stroke-width="1.200"/>
<g fill="#2c5b92" stroke="#fff" stroke-width=".8"><rect x="1614" y="111" width="2.200" height="2.200"/><rect x="1607.500" y="126" width="2.200" height="2.200"/><rect x="1620" y="126" width="2.200" height="2.200"/></g>
<rect x="1643" y="118" width="2.500" height="2.500"/>
<path d="M1669 127 1677 114"/><rect x="1667.500" y="126.500" width="2" height="2"/><rect x="1676.500" y="112" width="2" height="2"/>
<path d="M1705 112 1698 127H1705"/>
</g>
<!-- selection tools -->
<g stroke="#16263e" fill="url(#btn2)">
<rect x="1553.500" y="156.500" width="34" height="20" rx="4"/>
<rect x="1589.500" y="156.500" width="34" height="20" rx="4"/>
<rect x="1625.500" y="156.500" width="34" height="20" rx="4"/>
<rect x="1661.500" y="156.500" width="34" height="20" rx="4"/>
<rect x="1697.500" y="156.500" width="30" height="20" rx="4"/>
</g>
<g font-size="10" text-anchor="middle" fill="#3f5f86">
<text x="1570.500" y="171">Loop</text><text x="1606.500" y="171">Ring</text><text x="1642.500" y="171">Btw</text><text x="1678.500" y="171" fill="#14233a">Inv</text>
</g>
<!-- tabs -->
<path d="M1545 241V228Q1545 224 1549 224H1588Q1592 224 1592 228V241Z" fill="#98a3b5" stroke="#14213a" stroke-width=".8"/>
<path d="M1592 241V228Q1592 225 1596 225H1631Q1635 225 1635 228V241Z" fill="url(#tab)" stroke="#14213a" stroke-width=".8"/>
<path d="M1635 241V228Q1635 225 1639 225H1686Q1690 225 1690 228V241Z" fill="url(#tab)" stroke="#14213a" stroke-width=".8"/>
<path d="M1691 241V228Q1691 225 1695 225H1705V241Z" fill="url(#tab)" stroke="#14213a" stroke-width=".8"/>
<g font-size="10">
<text x="1552" y="238" fill="#14213a">Model</text>
<text x="1596" y="238" fill="#eef1f6">Display</text>
<text x="1640" y="238" fill="#eef1f6">Operations</text>
<text x="1695" y="238" fill="#eef1f6">Un</text>
</g>
<rect x="1546" y="256" width="159" height="628" fill="#98a3b5"/>
<rect x="1545" y="241" width="1" height="643" fill="#14213a"/>
<rect x="1546" y="241" width="159" height="15" fill="url(#hdr)"/>
<path d="M1549 245H1559L1554 251Z" fill="#fff"/>
<text x="1561" y="252" font-size="10" fill="#eef1f6">UV Mapping</text>
<rect x="1546" y="553" width="159" height="16" fill="url(#hdr)"/>
<path d="M1548 558H1559L1553.500 564Z" fill="#fff"/>
<text x="1561" y="565" font-size="10" fill="#eef1f6">Statistics</text>
<g font-size="10" fill="#1c2538">
<text x="1649" y="583" text-anchor="middle">Total</text><text x="1687" y="583">Selected</text>
<g text-anchor="end"><text x="1624" y="604">Polymeshes:</text><text x="1623" y="621">Polygons:</text><text x="1624" y="638">Edges:</text><text x="1623" y="655">Vertices:</text></g>
<g text-anchor="middle"><text x="1650" y="604">1</text><text x="1650" y="621">971</text><text x="1651" y="638">1947</text><text x="1650" y="655">973</text>
<text x="1701" y="604">0</text><text x="1701" y="621">0</text><text x="1701" y="638">0</text><text x="1701" y="655">0</text></g>
</g>
</svg>
</body></html>
